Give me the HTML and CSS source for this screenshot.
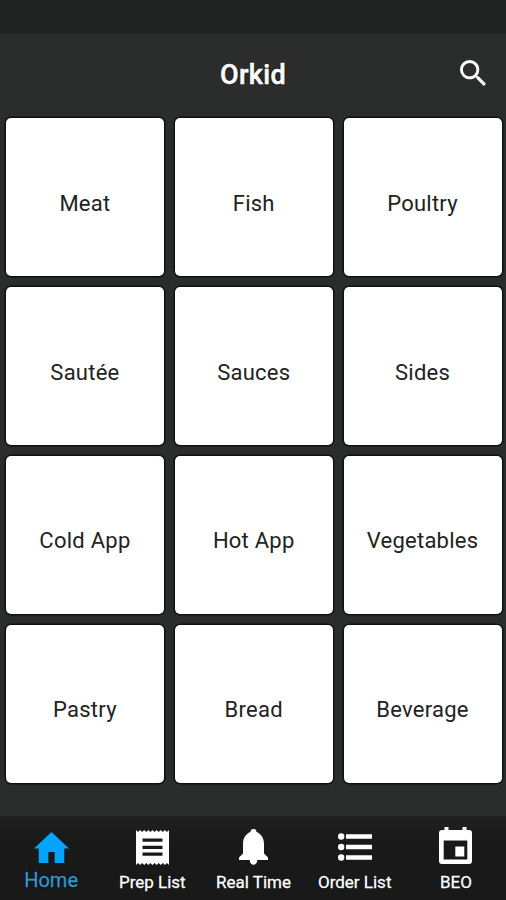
FILE: index.html
```html
<!DOCTYPE html>
<html lang="en">
<head>
<meta charset="utf-8">
<title>Orkid</title>
<link rel="stylesheet" href="styles.css">
</head>
<body>
<div class="status"></div>
<header class="bar">
  <h1>Orkid</h1>
  <svg class="search" viewBox="3 3 17.5 17.5"><path d="M15.5 14h-.79l-.28-.27A6.471 6.471 0 0 0 16 9.5 6.5 6.5 0 1 0 9.5 16c1.61 0 3.09-.59 4.23-1.57l.27.28v.79l5 4.99L20.49 19l-4.99-5zm-6 0C7.01 14 5 11.99 5 9.5S7.01 5 9.5 5 14 7.01 14 9.5 11.99 14 9.5 14z"/></svg>
</header>
<main class="grid">
  <div class="card">Meat</div><div class="card">Fish</div><div class="card">Poultry</div>
  <div class="card">Sautée</div><div class="card">Sauces</div><div class="card">Sides</div>
  <div class="card">Cold App</div><div class="card">Hot App</div><div class="card">Vegetables</div>
  <div class="card">Pastry</div><div class="card">Bread</div><div class="card">Beverage</div>
</main>
<nav class="tabs">
  <a class="tab active"><span class="icon"><svg width="35" height="31" viewBox="2 3 20 17" preserveAspectRatio="none"><path d="M10.200 20v-6h3.600v6h5.500v-8h2.700L12 3 2 12h2.700v8z"/></svg></span><span class="label">Home</span></a>
  <a class="tab"><span class="icon"><svg width="33" height="35" viewBox="0 0 33 35"><path fill-rule="evenodd" d="M0 0l2.060 2 2.060-2 2.060 2 2.060-2 2.060 2 2.060-2 2.060 2 2.080-2 2.060 2 2.060-2 2.060 2 2.060-2 2.060 2 2.060-2 2.060 2L33 0v35l-2.060-2-2.060 2-2.060-2-2.060 2-2.060-2-2.060 2-2.060-2-2.080 2-2.060-2-2.060 2-2.060-2-2.060 2-2.060-2-2.060 2-2.060-2L0 35zM6.500 8.600v3.200h20V8.600zM6.500 15.700v3.200h20v-3.200zM6.500 22.500v3.200h20v-3.200z"/></svg></span><span class="label">Prep List</span></a>
  <a class="tab"><span class="icon"><svg width="29" height="36" viewBox="0 0 29 36"><path d="M14.500 0c-2 0-3 1.300-3 3C6.500 5 4 9.500 4 15v9.500L0 28.500V31h10.700c0 6.300 7.600 6.300 7.600 0H29v-2.500l-4-4V15c0-5.500-2.500-10-7.500-12 0-1.700-1-3-3-3z"/></svg></span><span class="label">Real Time</span></a>
  <a class="tab"><span class="icon"><svg width="34" height="28" viewBox="0 0 34 28"><circle cx="3.200" cy="3.500" r="3.200"/><circle cx="3.200" cy="14" r="3.200"/><circle cx="3.200" cy="24.500" r="3.200"/><path d="M8 1.200h26v4.600H8zM8 11.700h26v4.600H8zM8 22.200h26v4.600H8z"/></svg></span><span class="label">Order List</span></a>
  <a class="tab"><span class="icon raised"><svg width="33" height="37" viewBox="0 0 33 37"><path fill-rule="evenodd" d="M5.500 0h4v3h14V0h4v3H30a3 3 0 0 1 3 3v28a3 3 0 0 1-3 3H3a3 3 0 0 1-3-3V6a3 3 0 0 1 3-3h2.500zM4.700 13.500v19h23.600v-19z"/><path d="M16.300 19.500h9v10h-9z"/></svg></span><span class="label">BEO</span></a>
</nav>
</body>
</html>
```
FILE: styles.css
```css
* { box-sizing: border-box; }
body {
  margin: 0;
  width: 506px;
  height: 900px;
  display: flex;
  flex-direction: column;
  overflow: hidden;
  background: #2b2d2c;
  color: #fff;
  font-family: Roboto, "Liberation Sans", sans-serif;
}
.status { height: 34px; background: #212322; flex: none; }
.bar {
  height: 84.4px;
  flex: none;
  display: grid;
  grid-template-columns: 1fr auto 1fr;
  align-items: center;
  padding: 0 20px 2px;
}
.bar h1 {
  grid-column: 2;
  margin: 0;
  font-size: 27px;
  line-height: 32px;
  font-weight: 500;
  letter-spacing: 0.300px;
  -webkit-text-stroke: 0.5px #fff;
  text-shadow: 0 0 2px #000;
}
.search { width: 26px; height: 26px; justify-self: end; margin-bottom: 4px; }
svg { display: block; fill: currentColor; overflow: visible; }
.grid {
  flex: 1;
  display: grid;
  grid-template-columns: repeat(3, 158px);
  grid-auto-rows: 158px;
  gap: 10.800px;
  padding-left: 5.950px;
}
.card {
  display: flex;
  align-items: center;
  justify-content: center;
  padding-top: 12px;
  border-radius: 5px;
  background: #fff;
  color: #222;
  box-shadow: 0 0 0 1.500px #101111;
  font-size: 22px;
  letter-spacing: 0.250px;
}
.tabs {
  height: 84px;
  flex: none;
  display: grid;
  grid-template-columns: repeat(5, 1fr);
  background: linear-gradient(#202020, #191919 35%);
}
.tab { display: flex; flex-direction: column; align-items: center; padding-left: 1px; }
.icon { height: 62px; display: flex; align-items: center; }
.raised { padding-bottom: 3px; }
.label {
  margin-top: -7px;
  font-size: 17px;
  line-height: 22px;
  white-space: nowrap;
  -webkit-text-stroke: 0.3px currentColor;
  text-shadow: 0 0 2px #000;
}
.active { color: #03a4fb; }
.active .label { margin-top: -9px; font-size: 20px; color: #3197cf; }
```
